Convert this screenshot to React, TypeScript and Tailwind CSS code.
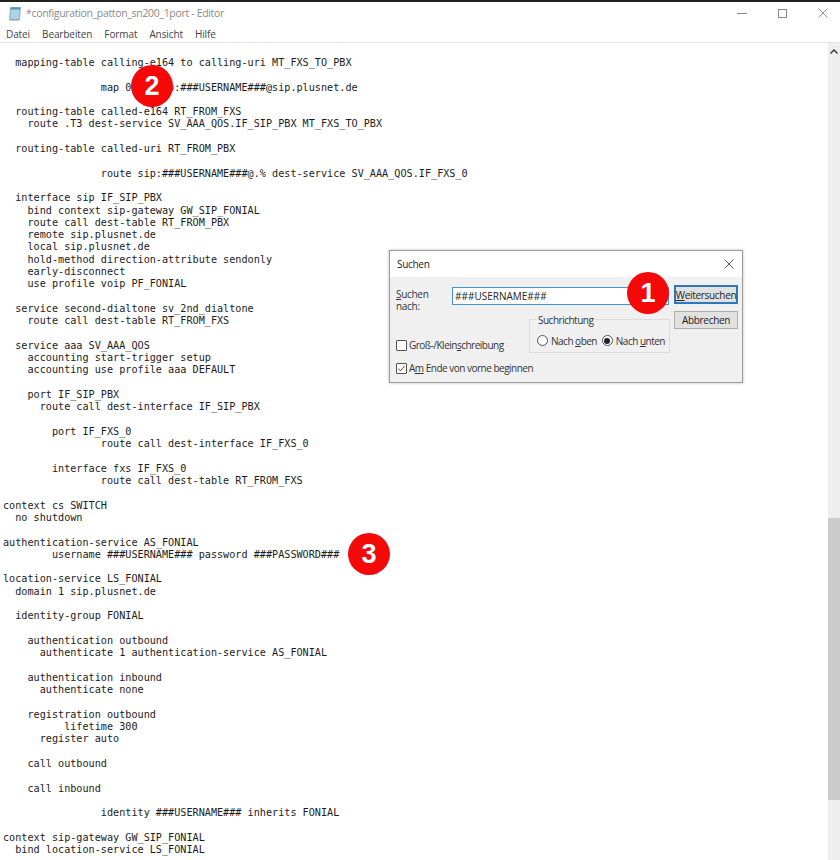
import type { ReactNode } from "react";

const configText = `  mapping-table calling-e164 to calling-uri MT_FXS_TO_PBX

                map 0.%  sip:###USERNAME###@sip.plusnet.de

  routing-table called-e164 RT_FROM_FXS
    route .T3 dest-service SV_AAA_QOS.IF_SIP_PBX MT_FXS_TO_PBX

  routing-table called-uri RT_FROM_PBX

                route sip:###USERNAME###@.% dest-service SV_AAA_QOS.IF_FXS_0

  interface sip IF_SIP_PBX
    bind context sip-gateway GW_SIP_FONIAL
    route call dest-table RT_FROM_PBX
    remote sip.plusnet.de
    local sip.plusnet.de
    hold-method direction-attribute sendonly
    early-disconnect
    use profile voip PF_FONIAL

  service second-dialtone sv_2nd_dialtone
    route call dest-table RT_FROM_FXS

  service aaa SV_AAA_QOS
    accounting start-trigger setup
    accounting use profile aaa DEFAULT

    port IF_SIP_PBX
      route call dest-interface IF_SIP_PBX

        port IF_FXS_0
                route call dest-interface IF_FXS_0

        interface fxs IF_FXS_0
                route call dest-table RT_FROM_FXS

context cs SWITCH
  no shutdown

authentication-service AS_FONIAL
        username ###USERNAME### password ###PASSWORD###

location-service LS_FONIAL
  domain 1 sip.plusnet.de

  identity-group FONIAL

    authentication outbound
      authenticate 1 authentication-service AS_FONIAL

    authentication inbound
      authenticate none

    registration outbound
          lifetime 300
      register auto

    call outbound

    call inbound

                identity ###USERNAME### inherits FONIAL

context sip-gateway GW_SIP_FONIAL
  bind location-service LS_FONIAL`;

function NumberBadge({ n, className }: { n: number; className: string }) {
  return (
    <div
      className={`absolute flex h-[42px] w-[42px] items-center justify-center rounded-full bg-[#f40808] font-['Liberation_Sans',sans-serif] text-[27px] font-bold leading-none text-white ${className}`}
    >
      {n}
    </div>
  );
}

function Radio({ checked, children }: { checked?: boolean; children: ReactNode }) {
  return (
    <div className="flex items-center gap-[3px] whitespace-nowrap">
      <span className="flex h-[11px] w-[11px] items-center justify-center rounded-full border border-[#555] bg-white">
        {checked ? <span className="h-[6px] w-[6px] rounded-full bg-[#222]" /> : null}
      </span>
      <span>{children}</span>
    </div>
  );
}

function Check({ checked, children }: { checked?: boolean; children: ReactNode }) {
  return (
    <div className="flex items-center gap-[2px] whitespace-nowrap">
      <span className="flex h-[11px] w-[11px] items-center justify-center rounded-[1px] border border-[#555] bg-white">
        {checked ? (
          <svg viewBox="0 0 11 11" className="h-[11px] w-[11px]" fill="none" stroke="#333" strokeWidth="1.1">
            <path d="M1.5 5.5 L4.2 8.3 L9.5 2.2" />
          </svg>
        ) : null}
      </span>
      <span>{children}</span>
    </div>
  );
}

function FindDialog() {
  return (
    <div className="absolute left-[389px] top-[250px] h-[133px] w-[354px] border border-[#9a9a9a] bg-[#f0f0f0] font-['Open_Sans','Noto_Sans',sans-serif] text-[10px] leading-[12px] tracking-[-0.3px] text-[#333] shadow-[0_0_3px_rgba(0,0,0,0.25)]">
      <div className="flex h-[26px] items-center justify-between bg-white pl-[7px] pr-[8px]">
        <span className="text-[#222]">Suchen</span>
        <svg viewBox="0 0 10 10" className="h-[10px] w-[10px]" fill="none" stroke="#444" strokeWidth="0.9">
          <path d="M0.5 0.5 L9.5 9.5 M9.5 0.5 L0.5 9.5" />
        </svg>
      </div>
      <div className="flex pl-[6px] pr-[4px] pt-[8px]">
        <div className="w-[278px] shrink-0">
          <div className="flex">
            <div className="w-[56px] pt-[3px] leading-[12px]">
              <span className="underline">S</span>uchen
              <br />
              nach:
            </div>
            <div className="mt-[2px] flex h-[18px] w-[217px] items-center border border-[#3f95d8] bg-white pl-[2px] tracking-normal text-[#222]">
              ###USERNAME###
            </div>
          </div>
          <div className="mt-[7px] flex items-start justify-between tracking-[-0.5px]">
            <div className="flex w-[120px] shrink-0 flex-col gap-[11px] pt-[20px]">
              <Check>
                Groß-/Klein<span className="underline">s</span>chreibung
              </Check>
              <Check checked>
                A<span className="underline">m</span> Ende von vorne beginnen
              </Check>
            </div>
            <div className="relative mr-[4px] flex h-[34px] w-[141px] shrink-0 items-center justify-between border border-[#dcdcdc] pl-[7px] pr-[4px] pt-[9px]">
              <span className="absolute left-[7px] top-[-6px] bg-[#f0f0f0] px-px">Suchrichtung</span>
              <Radio>
                Nach <span className="underline">o</span>ben
              </Radio>
              <Radio checked>
                Nach <span className="underline">u</span>nten
              </Radio>
            </div>
          </div>
        </div>
        <div className="flex w-[64px] flex-col gap-[7px] text-[#222]">
          <div className="flex h-[19px] items-center justify-center whitespace-nowrap border-2 border-[#2f77b8] bg-[#e1e1e1]">
            <span>
              <span className="underline">W</span>eitersuchen
            </span>
          </div>
          <div className="flex h-[18px] items-center justify-center border border-[#adadad] bg-[#e1e1e1]">Abbrechen</div>
        </div>
      </div>
    </div>
  );
}

export default function App() {
  return (
    <div className="relative flex h-[860px] w-[840px] flex-col overflow-hidden bg-white">
      <div className="h-[2px] bg-[#222]" />
      <div className="flex h-[24px] items-center pl-[8px] pb-[2px] font-['Open_Sans','Noto_Sans',sans-serif]">
        <svg viewBox="0 0 14 15" className="h-[15px] w-[14px]">
          <path d="M2.5 1.5 H12.5 L11.5 13.5 H1.5 Z" fill="#a9d3e6" stroke="#7b97a6" strokeWidth="0.7" />
          <path d="M2.5 1.5 H12.5 L12.3 3.6 H2.3 Z" fill="#4f97bb" />
          <path d="M1.5 13.5 H11.5 L11.4 14.5 H1.4 Z" fill="#a79a80" />
        </svg>
        <span className="ml-[4px] text-[10.5px] leading-none tracking-[-0.33px] text-[#8a8a8a]">*configuration_patton_sn200_1port - Editor</span>
        <div className="ml-auto flex items-center pr-[12px]">
          <span className="h-px w-[10px] bg-[#888]" />
          <span className="ml-[31px] h-[9px] w-[9px] border border-[#888]" />
          <svg viewBox="0 0 10 10" className="ml-[31px] h-[10px] w-[10px]" fill="none" stroke="#888" strokeWidth="0.9">
            <path d="M0.5 0.5 L9.5 9.5 M9.5 0.5 L0.5 9.5" />
          </svg>
        </div>
      </div>
      <div className="flex h-[17px] items-center gap-[12px] border-b border-[#e4e4e4] pl-[6px] font-['Open_Sans','Noto_Sans',sans-serif] text-[10px] tracking-[-0.1px] text-[#444]">
        <span>Datei</span>
        <span>Bearbeiten</span>
        <span>Format</span>
        <span>Ansicht</span>
        <span>Hilfe</span>
      </div>
      <div className="flex min-h-0 flex-1">
        <pre className="min-w-0 flex-1 overflow-hidden pl-[3px] pt-[14px] font-['DejaVu_Sans_Mono',monospace] text-[10.16px] leading-[12.3px] text-[#1c1c1c]">
          {configText}
        </pre>
        <div className="flex w-[12px] flex-col bg-[#eeeeee]">
          <div className="flex h-[16px] items-center justify-center">
            <svg viewBox="0 0 8 5" className="h-[5px] w-[8px]" fill="none" stroke="#333" strokeWidth="1.4">
              <path d="M0.5 4.5 L4 1 L7.5 4.5" />
            </svg>
          </div>
          <div className="mt-[459px] h-[282px] bg-[#cbcbcb]" />
        </div>
      </div>
      <FindDialog />
      <NumberBadge n={1} className="left-[627px] top-[272px]" />
      <NumberBadge n={2} className="left-[131px] top-[65px]" />
      <NumberBadge n={3} className="left-[348px] top-[533px]" />
    </div>
  );
}
